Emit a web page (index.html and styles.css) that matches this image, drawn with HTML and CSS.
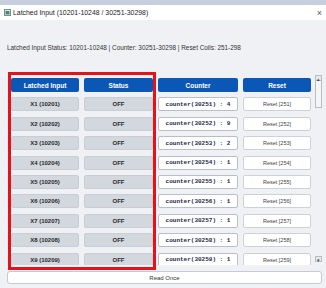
FILE: index.html
```html
<!DOCTYPE html>
<html lang="en">
<head>
  <meta charset="UTF-8" />
  <title>Latched Input (10201-10248 / 30251-30298)</title>
  <link rel="stylesheet" href="styles.css">
</head>
<body>
  <div class="window">
    <div class="top-strip"></div>
    <div class="title-bar">
      <svg class="app-icon" width="7" height="7" viewBox="0 0 7 7">
        <rect x="0.5" y="0.5" width="6" height="6" fill="#e8ecef" stroke="#7c8a96" />
        <rect x="1.5" y="2" width="4" height="3.5" fill="#3c8c7c" />
      </svg>
      <span class="title">Latched Input (10201-10248 / 30251-30298)</span>
      <span class="close">×</span>
    </div>

    <div class="content">
      <p class="status">Latched Input Status: 10201-10248 | Counter: 30251-30298 | Reset Coils: 251-298</p>

      <div class="panel">
        <div class="grid">
          <div class="head">Latched Input</div>
          <div class="head">Status</div>
          <div class="head">Counter</div>
          <div class="head">Reset</div>

          <div class="cell input">X1 (10201)</div><div class="cell state">OFF</div><div class="cell counter">counter(30251) : 4</div><div class="cell reset">Reset [251]</div>
          <div class="cell input">X2 (10202)</div><div class="cell state">OFF</div><div class="cell counter">counter(30252) : 9</div><div class="cell reset">Reset [252]</div>
          <div class="cell input">X3 (10203)</div><div class="cell state">OFF</div><div class="cell counter">counter(30253) : 2</div><div class="cell reset">Reset [253]</div>
          <div class="cell input">X4 (10204)</div><div class="cell state">OFF</div><div class="cell counter">counter(30254) : 1</div><div class="cell reset">Reset [254]</div>
          <div class="cell input">X5 (10205)</div><div class="cell state">OFF</div><div class="cell counter">counter(30255) : 1</div><div class="cell reset">Reset [255]</div>
          <div class="cell input">X6 (10206)</div><div class="cell state">OFF</div><div class="cell counter">counter(30256) : 1</div><div class="cell reset">Reset [256]</div>
          <div class="cell input">X7 (10207)</div><div class="cell state">OFF</div><div class="cell counter">counter(30257) : 1</div><div class="cell reset">Reset [257]</div>
          <div class="cell input">X8 (10208)</div><div class="cell state">OFF</div><div class="cell counter">counter(30258) : 1</div><div class="cell reset">Reset [258]</div>
          <div class="cell input">X9 (10209)</div><div class="cell state">OFF</div><div class="cell counter">counter(30259) : 1</div><div class="cell reset">Reset [259]</div>
        </div>

        <div class="scrollbar">
          <div class="arrow">▴</div>
          <div class="thumb"></div>
          <div class="track"></div>
          <div class="arrow">▾</div>
        </div>
      </div>

      <button class="read-once">Read Once</button>
    </div>

    <div class="highlight"></div>
  </div>
</body>
</html>
```

FILE: styles.css
```css
body {
  margin: 0;
  font-family: 'Liberation Sans', Arial, sans-serif;
  background: #eff1f5;
}

.window {
  position: relative;
  width: 326px;
  height: 288px;
  overflow: hidden;
  background: #eff1f5;
}

.top-strip {
  height: 5px;
  background: #c7cfdf;
}

.title-bar {
  height: 15px;
  display: flex;
  align-items: center;
  background: #fff;
  padding: 0 4px 0 4px;
}

.app-icon {
  margin-right: 2px;
}

.title {
  font-size: 6.9px;
  color: #222;
  flex: 1;
}

.close {
  font-size: 9px;
  color: #555;
}

.content {
  padding: 0 4px 0 7px;
}

.status {
  margin: 24px 0 0;
  font-size: 6.4px;
  line-height: 8px;
  color: #333;
}

.panel {
  display: flex;
  height: 192px;
  margin-top: 21px;
  overflow: hidden;
}

.grid {
  display: grid;
  grid-template-columns: 68px 69px 80px 68px;
  grid-auto-rows: 14px;
  column-gap: 5px;
  row-gap: 5.4px;
  padding: 5px 0 0 4px;
  align-content: start;
}

.grid .head {
  margin-bottom: -0.4px;
}

.head,
.cell {
  display: flex;
  align-items: center;
  justify-content: center;
  border-radius: 2px;
  white-space: nowrap;
}

.head {
  background: #0b57b6;
  color: #fff;
  font-size: 6.5px;
  font-weight: bold;
}

.input,
.state {
  background: #d3d7de;
  border: 1px solid #c9cdd4;
  color: #2a2a2a;
  font-size: 6px;
  font-weight: bold;
}

.counter {
  background: #fff;
  border: 1px solid #b9bfc9;
  font-family: 'Liberation Mono', 'Courier New', monospace;
  font-size: 6px;
  font-weight: bold;
  color: #1d2b48;
}

.reset {
  background: #fff;
  border: 1px solid #cdd1d8;
  font-size: 5.5px;
  color: #444;
}

.scrollbar {
  display: flex;
  flex-direction: column;
  width: 7px;
  margin-left: 4px;
  padding-top: 2px;
  padding-bottom: 3px;
}

.arrow {
  height: 6px;
  font-size: 5px;
  line-height: 6px;
  text-align: center;
  color: #444;
  background: #e6e8ec;
  border: 1px solid #b8bcc3;
  box-sizing: border-box;
}

.thumb {
  height: 27px;
  background: #f4f5f7;
  border: 1px solid #b8bcc3;
  border-top: none;
  box-sizing: border-box;
}

.track {
  flex: 1;
}

.read-once {
  display: block;
  width: 315px;
  height: 13px;
  margin-top: 6px;
  background: #fff;
  border: 1px solid #c6cad2;
  border-radius: 3px;
  font-family: 'Liberation Sans', Arial, sans-serif;
  font-size: 6px;
  color: #333;
  padding: 0;
}

.highlight {
  position: absolute;
  left: 8px;
  top: 72px;
  width: 148px;
  height: 198px;
  border: 3px solid #e3121b;
  box-sizing: border-box;
  pointer-events: none;
}
```
